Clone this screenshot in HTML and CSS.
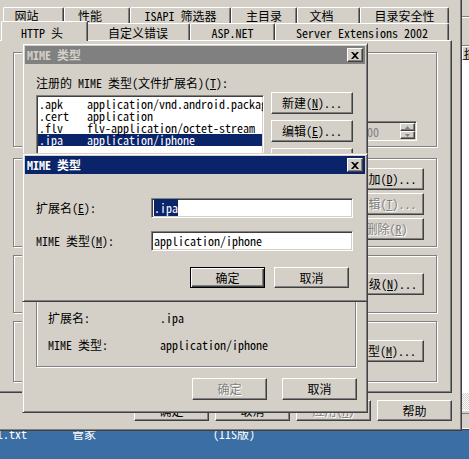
FILE: index.html
```html
<!DOCTYPE html>
<html lang="zh-CN">
<head>
    <meta charset="UTF-8">
    <title>MIME 类型</title>
    <link rel="stylesheet" href="styles.css">
</head>
<body>
    <!-- 桌面图标文字 -->
    <div class="desk-label lbl-txt">l.txt</div>
    <div class="desk-label lbl-gj">管家</div>
    <div class="desk-label lbl-iis">(IIS版)</div>

    <!-- 后面的窗口 -->
    <div class="win bgwin">
        <div class="bg-tool"></div>
        <div class="bg-list">
            <div class="bg-head">描述</div>
            <div class="bg-body"></div>
            <div class="bg-scroll"></div>
        </div>
        <div class="bg-status"></div>
    </div>

    <!-- IIS 属性 -->
    <div class="win iis">
        <div class="tabs">
            <div class="tabrow back">
                <div class="tab narrow">网站</div>
                <div class="tab narrow">性能</div>
                <div class="tab">ISAPI 筛选器</div>
                <div class="tab">主目录</div>
                <div class="tab narrow">文档</div>
                <div class="tab">目录安全性</div>
            </div>
            <div class="tabrow front">
                <div class="tab sel">HTTP 头</div>
                <div class="tab">自定义错误</div>
                <div class="tab">ASP.NET</div>
                <div class="tab">Server Extensions 2002</div>
            </div>
        </div>
        <div class="page">
            <div class="group g1">
                <div class="spin-edit">
                    <span class="val">100</span>
                    <div class="spin">
                        <div class="spin-btn"><svg width="5" height="3"><path d="M2.5 0L5 3H0z"/></svg></div>
                        <div class="spin-btn"><svg width="5" height="3"><path d="M0 0h5L2.5 3z"/></svg></div>
                    </div>
                </div>
            </div>
            <div class="group g2">
                <button class="btn">添加(<u>D</u>)...</button>
                <button class="btn dis">编辑(<u>T</u>)...</button>
                <button class="btn dis">删除(<u>R</u>)</button>
            </div>
            <div class="group g3">
                <button class="btn rate">编辑分级(<u>N</u>)...</button>
            </div>
            <div class="group g4">
                <button class="btn mime">MIME 类型(<u>M</u>)...</button>
            </div>
        </div>
        <div class="footer">
            <button class="btn">确定</button>
            <button class="btn">取消</button>
            <button class="btn dis">应用(<u>A</u>)</button>
            <button class="btn">帮助</button>
        </div>
    </div>

    <!-- MIME 类型 列表 -->
    <div class="win mime-list">
        <div class="title inactive">
            <span>MIME 类型</span>
            <span class="close"><svg width="8" height="7"><path d="M0 0h2l2 2 2-2h2L5 3.5 8 7H6L4 5 2 7H0l3-3.5z"/></svg></span>
        </div>
        <div class="body">
            <div class="label">注册的 MIME 类型(文件扩展名)(<u>T</u>):</div>
            <div class="list-row">
                <div class="listbox">
                    <div class="row"><span class="ext">.apk</span>application/vnd.android.package-archive</div>
                    <div class="row"><span class="ext">.cert</span>application</div>
                    <div class="row"><span class="ext">.flv</span>flv-application/octet-stream</div>
                    <div class="row sel"><span class="ext">.ipa</span>application/iphone</div>
                </div>
                <div class="btn-col">
                    <button class="btn">新建(<u>N</u>)...</button>
                    <button class="btn">编辑(<u>E</u>)...</button>
                    <button class="btn">删除(<u>R</u>)</button>
                </div>
            </div>
            <div class="frame">
                <span>扩展名:</span><span>.ipa</span>
                <span>MIME 类型:</span><span>application/iphone</span>
            </div>
            <div class="buttons">
                <button class="btn dis">确定</button>
                <button class="btn">取消</button>
            </div>
        </div>
    </div>

    <!-- MIME 类型 编辑 -->
    <div class="win mime-edit">
        <div class="title">
            <span>MIME 类型</span>
            <span class="close"><svg width="8" height="7"><path d="M0 0h2l2 2 2-2h2L5 3.5 8 7H6L4 5 2 7H0l3-3.5z"/></svg></span>
        </div>
        <div class="body">
            <div class="fields">
                <label>扩展名(<u>E</u>):</label>
                <div class="edit"><span class="hl">.ipa</span></div>
                <label>MIME 类型(<u>M</u>):</label>
                <div class="edit">application/iphone</div>
            </div>
            <div class="buttons">
                <button class="btn default">确定</button>
                <button class="btn">取消</button>
            </div>
        </div>
    </div>
</body>
</html>
```

FILE: styles.css
```css
* { box-sizing: border-box; }

body {
    margin: 0;
    width: 469px;
    height: 459px;
    position: relative;
    overflow: hidden;
    background: #3a6ea5;
    font-family: "Noto Sans Mono CJK SC", "Liberation Mono", "Noto Sans CJK SC", monospace;
    font-size: 12px;
    line-height: 12px;
    color: #000;
}
button { font: inherit; color: inherit; margin: 0; padding: 0; }

/* 桌面 */
.desk-label { position: absolute; top: 428px; color: #fff; white-space: nowrap; }
.lbl-txt { left: -3px; }
.lbl-gj { left: 72px; }
.lbl-iis { left: 213px; }

/* 窗口外框 */
.win {
    position: absolute;
    z-index: 0;
    padding: 2px;
    background: #d4d0c8;
    border: 1px solid;
    border-color: #d4d0c8 #404040 #404040 #d4d0c8;
    box-shadow: inset 1px 1px #fff, inset -1px -1px #808080;
}
.iis { left: -4px; top: -4px; width: 466px; height: 435px; }
.bgwin { left: 458px; top: -4px; width: 40px; height: 434px; }
.mime-list { left: 22px; top: 43px; width: 346px; height: 370px; }
.mime-edit { left: 22px; top: 153px; width: 346px; height: 149px; }

.title {
    height: 18px;
    display: flex;
    align-items: center;
    justify-content: space-between;
    padding: 0 2px 0 2px;
    background: #0a246a;
    color: #fff;
    font-weight: bold;
}
.title.inactive { background: #808080; color: #d4d0c8; }
.close {
    width: 16px;
    height: 14px;
    display: flex;
    align-items: center;
    justify-content: center;
    background: #d4d0c8;
    border: 1px solid;
    border-color: #fff #404040 #404040 #fff;
    box-shadow: inset -1px -1px #808080;
}

/* 按钮 / 输入框 */
.btn {
    display: flex;
    align-items: center;
    justify-content: center;
    width: 75px;
    height: 21px;
    white-space: nowrap;
    background: #d4d0c8;
    border: 1px solid;
    border-color: #fff #404040 #404040 #fff;
    box-shadow: inset -1px -1px #808080;
}
.btn.default {
    border-color: #000;
    box-shadow: inset 1px 1px #fff, inset -1px -1px #404040, inset -2px -2px #808080;
}
.dis { color: #808080; text-shadow: 1px 1px #fff; }

.edit {
    height: 20px;
    padding: 3px 2px 0 2px;
    background: #fff;
    border: 1px solid;
    border-color: #808080 #fff #fff #808080;
    box-shadow: inset 1px 1px #404040, inset -1px -1px #d4d0c8;
    white-space: nowrap;
    overflow: hidden;
}
.hl { background: #0a246a; color: #fff; }

.group {
    width: 424px;
    border: 1px solid #808080;
    box-shadow: inset 1px 1px #fff, 1px 1px #fff;
}

/* 选项卡 */
.tabs { padding: 8px 0 0 4px; }
.tabrow { display: flex; }
.tabrow.back { height: 16px; }
.tabrow.front { height: 17px; }
.tab {
    height: 100%;
    padding-top: 2px;
    text-align: center;
    white-space: nowrap;
    background: #d4d0c8;
    border: 1px solid;
    border-bottom: 0;
    border-color: #fff #404040 #404040 #fff;
    border-radius: 2px 2px 0 0;
    box-shadow: inset -1px 0 #808080;
}
.tab.narrow { padding-right: 14px; }
.back .tab:nth-child(1) { width: 61px; }
.back .tab:nth-child(2) { width: 66px; }
.back .tab:nth-child(3) { width: 101px; }
.back .tab:nth-child(4) { width: 66px; }
.back .tab:nth-child(5) { width: 63px; }
.back .tab:nth-child(6) { width: 89px; }
.front .tab { padding-top: 3px; }
.front .tab:nth-child(1) { width: 87px; }
.front .tab:nth-child(2) { width: 104px; }
.front .tab:nth-child(3) { width: 85px; }
.front .tab:nth-child(4) { width: 174px; }
.tab.sel {
    position: relative;
    z-index: 1;
    height: 20px;
    margin: -2px -2px 0;
    padding: 5px 5px 0 0;
}

.page {
    width: 453px;
    height: 353px;
    padding: 11px 0 0 13px;
    border: 1px solid;
    border-color: #fff #404040 #404040 #fff;
    box-shadow: inset -1px -1px #808080;
}
.g1 {
    height: 95px;
    display: flex;
    justify-content: flex-end;
    align-items: flex-end;
    padding: 0 19px 5px 0;
}
.g2 {
    height: 89px;
    margin-top: 11px;
    display: flex;
    flex-direction: column;
    align-items: flex-end;
    gap: 3px;
    padding: 9px 12px 0 0;
}
.g3, .g4 {
    margin-top: 8px;
    display: flex;
    justify-content: flex-end;
    padding-right: 12px;
}
.g3 { height: 58px; padding-top: 17px; }
.g4 { height: 61px; padding-top: 18px; }
.g2 .btn, .g3 .btn, .g4 .btn { height: 22px; }
.btn.rate { width: 98px; }
.btn.mime { width: 106px; }

.spin-edit {
    width: 61px;
    height: 20px;
    display: flex;
    border: 1px solid;
    border-color: #808080 #fff #fff #808080;
    box-shadow: inset 1px 1px #404040, inset -1px -1px #d4d0c8;
    padding: 1px;
}
.spin-edit .val { flex: 1; padding: 3px 0 0 3px; color: #808080; }
.spin { width: 15px; display: flex; flex-direction: column; }
.spin-btn {
    flex: 1;
    display: flex;
    align-items: center;
    justify-content: center;
    border: 1px solid;
    border-color: #fff #404040 #404040 #fff;
    box-shadow: inset -1px -1px #808080;
}
.spin-btn svg { fill: #808080; }

.footer {
    width: 453px;
    margin-top: 7px;
    display: flex;
    justify-content: flex-end;
    gap: 6px;
}

/* MIME 类型 列表窗口 */
.mime-list .body { padding: 13px 8px 0 11px; }
.list-row { display: flex; align-items: flex-start; gap: 7px; margin-top: 3px; }
.listbox {
    width: 228px;
    height: 65px;
    margin-top: 3px;
    padding: 2px 1px 0;
    background: #fff;
    border: 1px solid;
    border-color: #808080 #fff #fff #808080;
    box-shadow: inset 1px 1px #404040, inset -1px -1px #d4d0c8;
    overflow: hidden;
}
.listbox .row { display: flex; height: 12px; padding-left: 1px; white-space: nowrap; }
.listbox .row.sel { background: #0a246a; color: #fff; }
.listbox .ext { width: 48px; flex: none; }
.btn-col { display: flex; flex-direction: column; gap: 6px; }
.btn-col .btn { width: 82px; height: 22px; }

.frame {
    width: 320px;
    height: 71px;
    margin-top: 126px;
    padding: 15px 0 0 11px;
    display: grid;
    grid-template-columns: 112px auto;
    align-content: start;
    row-gap: 15px;
    border: 1px solid #808080;
    box-shadow: inset 1px 1px #fff, 1px 1px #fff;
}
.mime-list .buttons {
    margin-top: 11px;
    display: flex;
    justify-content: flex-end;
    gap: 15px;
}
.mime-list .buttons .btn { height: 22px; }

/* MIME 类型 编辑窗口 */
.mime-edit .body { padding: 24px 0 0 11px; }
.fields {
    display: grid;
    grid-template-columns: 115px 202px;
    align-items: center;
    row-gap: 13px;
}
.mime-edit .buttons {
    margin-top: 16px;
    padding-right: 16px;
    display: flex;
    justify-content: flex-end;
    gap: 9px;
}

/* 后面的窗口 */
.bg-tool {
    height: 46px;
    background:
        linear-gradient(#808080, #808080) 0 17px / 100% 1px no-repeat,
        linear-gradient(#fff, #fff) 0 18px / 100% 1px no-repeat;
}
.bg-list {
    height: 366px;
    display: flex;
    flex-direction: column;
    border: 1px solid;
    border-color: #808080 #fff #fff #808080;
}
.bg-head {
    height: 14px;
    padding: 1px 0 0 1px;
    white-space: nowrap;
    border: 1px solid;
    border-color: #fff #404040 #404040 #fff;
}
.bg-body { flex: 1; background: #fff; }
.bg-scroll {
    height: 17px;
    background: repeating-conic-gradient(#d4d0c8 0 25%, #fff 0 50%) 0 0 / 2px 2px;
}
.bg-status {
    height: 16px;
    margin-top: 2px;
    border: 1px solid;
    border-color: #808080 #fff #fff #808080;
}
```
